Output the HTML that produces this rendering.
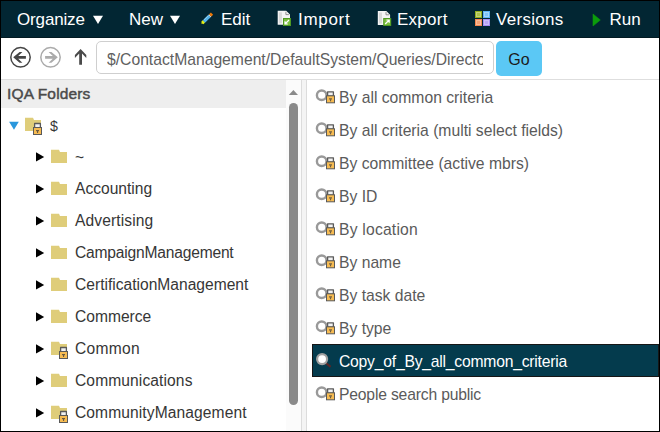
<!DOCTYPE html>
<html><head><meta charset="utf-8">
<style>
*{box-sizing:border-box;margin:0;padding:0}
html,body{width:660px;height:432px;overflow:hidden;background:#fff}
body{font-family:"Liberation Sans",sans-serif;position:relative}
.a{position:absolute}
#frame{position:absolute;left:0;top:0;width:660px;height:432px;border:1px solid #000;pointer-events:none;z-index:50}
#tb{left:1px;top:1px;width:658px;height:37px;background:#022633;border-bottom:1px solid #021a22}
.tl{position:absolute;top:1px;height:36px;line-height:36px;color:#fff;font-size:17px;white-space:nowrap}
#addr{left:1px;top:38px;width:658px;height:42px;background:#fff;border-bottom:1px solid #dedede}
#inp{left:96px;top:41px;width:398px;height:33px;border:1px solid #cfcfcf;border-radius:5px;background:#fff;overflow:hidden}
#inptxt{left:10px;top:2px;width:376px;height:31px;line-height:31px;font-size:15.7px;color:#606060;white-space:nowrap;overflow:hidden}
#go{left:496px;top:41px;width:46px;height:35px;background:#5bc8f5;border-radius:5px;font-size:16px;line-height:37px;text-align:center;color:#1b1b1b}
#hdr{left:1px;top:80px;width:285px;height:28px;background:#eeeeee}
#hdrt{left:6px;top:0;line-height:28px;font-size:15.5px;font-weight:normal;color:#4a4a4a;-webkit-text-stroke:0.45px #4a4a4a;letter-spacing:0.15px;white-space:nowrap}
#sb{left:286px;top:80px;width:15px;height:351px;background:#fbfbfb}
#split{left:301px;top:80px;width:6px;height:351px;background:#f4f4f4;border-left:1px solid #dcdcdc;border-right:1px solid #dcdcdc}
.tr{position:absolute;height:32px;line-height:32px;font-size:15.6px;color:#363636;white-space:nowrap}
.li{position:absolute;left:312px;width:347px;height:33px;line-height:33px;font-size:15.7px;color:#5a5a5a;white-space:nowrap}
.li span{position:absolute;left:27px;top:1px}
.li.sel{background:#043b4d;border:1px solid #161616;color:#fff}
.li.sel span{left:26px;top:0px}
</style></head><body>
<div id="frame"></div>
<div id="tb" class="a">
  <div class="tl" style="left:16px;letter-spacing:-0.15px">Organize</div>
  <div class="tl" style="left:128px">New</div>
  <div class="tl" style="left:220px">Edit</div>
  <div class="tl" style="left:297px;letter-spacing:0.7px">Import</div>
  <div class="tl" style="left:396px;letter-spacing:0.25px">Export</div>
  <div class="tl" style="left:495px;letter-spacing:0.3px">Versions</div>
  <div class="tl" style="left:608.5px">Run</div>
</div>
<div id="addr" class="a"></div>
<div id="inp" class="a"><div id="inptxt" class="a">$/ContactManagement/DefaultSystem/Queries/Directory</div></div>
<div id="go" class="a">Go</div>
<div id="hdr" class="a"><div id="hdrt" class="a">IQA Folders</div></div>
<div id="sb" class="a"></div>
<div id="split" class="a"></div>

<div class="tr" style="left:50px;top:110px;font-size:14.2px">$</div>
<div class="tr" style="left:75px;top:142px">~</div>
<div class="tr" style="left:75px;top:173px">Accounting</div>
<div class="tr" style="left:75px;top:205px;letter-spacing:0.1px">Advertising</div>
<div class="tr" style="left:75px;top:237px;letter-spacing:-0.2px">CampaignManagement</div>
<div class="tr" style="left:75px;top:269px">CertificationManagement</div>
<div class="tr" style="left:75px;top:301px">Commerce</div>
<div class="tr" style="left:75px;top:333px;letter-spacing:0.3px">Common</div>
<div class="tr" style="left:75px;top:365px;letter-spacing:0.1px">Communications</div>
<div class="tr" style="left:75px;top:397px;letter-spacing:0.09px">CommunityManagement</div>

<div class="li" style="top:80px"><span>By all common criteria</span></div>
<div class="li" style="top:113px"><span>By all criteria (multi select fields)</span></div>
<div class="li" style="top:146px"><span>By committee (active mbrs)</span></div>
<div class="li" style="top:179px"><span>By ID</span></div>
<div class="li" style="top:212px"><span style="letter-spacing:0.2px">By location</span></div>
<div class="li" style="top:245px"><span>By name</span></div>
<div class="li" style="top:278px"><span>By task date</span></div>
<div class="li" style="top:311px"><span>By type</span></div>
<div class="li sel" style="top:344px"><span style="letter-spacing:-0.22px">Copy_of_By_all_common_criteria</span></div>
<div class="li" style="top:377px"><span style="letter-spacing:-0.18px">People search public</span></div>
<svg class="a" style="left:0;top:0;z-index:10" width="660" height="432" viewBox="0 0 660 432">
<polygon points="93,15.8 103,15.8 98,24" fill="#fff"/>
<polygon points="170,15.8 180,15.8 175,24" fill="#fff"/>
<g transform="translate(201.3,24) rotate(-44)"><polygon points="0,0 3.4,-1.6 3.4,1.6" fill="#e4ee12"/><rect x="1.2" y="-1.6" width="2.4" height="3.2" fill="#e4ee12"/><rect x="3.6" y="-1.6" width="7.8" height="3.2" fill="#52b2ea"/><rect x="5" y="-1.6" width="6" height="0.9" fill="#9ad6f6"/><rect x="11.4" y="-1.6" width="0.9" height="3.2" fill="#e8e8e8"/><rect x="12.3" y="-1.6" width="2.6" height="3.2" fill="#ee7806"/></g>
<path d="M277.7 10.8 h8.5 l3.8 3.8 v10.2 h-12.3 z" fill="#f4f4f4"/><rect x="278.9" y="12.3" width="3" height="11" fill="#d9d9d9"/><path d="M285.9 11.8 v2.8 h3" fill="none" stroke="#888" stroke-width="0.9"/><rect x="283" y="18" width="8" height="8" fill="#4f9a22"/><rect x="284" y="19" width="6" height="6" fill="#7cbf3f"/><path d="M289 20 L285 24 M285 21.2 v2.8 h2.8" fill="none" stroke="#fff" stroke-width="1.2"/>
<path d="M377.8 11 h8.5 l3.8 3.8 v10.2 h-12.3 z" fill="#f4f4f4"/><rect x="379.0" y="12.5" width="3" height="11" fill="#d9d9d9"/><path d="M386.0 12 v2.8 h3" fill="none" stroke="#888" stroke-width="0.9"/><rect x="383.2" y="18" width="8" height="8" fill="#4f9a22"/><rect x="384.2" y="19" width="6" height="6" fill="#7cbf3f"/><path d="M385.2 24 L389.2 20 M386.4 20 h2.8 v2.8" fill="none" stroke="#fff" stroke-width="1.2"/>
<rect x="475" y="11" width="7" height="7" fill="#8fae1b"/><rect x="476.5" y="12.5" width="4" height="4" fill="#a9c04a" stroke="#c2d27a" stroke-width="1"/>
<rect x="483" y="11" width="7" height="7" fill="#5cb4f7"/><rect x="484.5" y="12.5" width="4" height="4" fill="#7fc4f9" stroke="#a6d6fb" stroke-width="1"/>
<rect x="475" y="19" width="7" height="7" fill="#f5874f"/><rect x="476.5" y="20.5" width="4" height="4" fill="#f7a272" stroke="#f9bb95" stroke-width="1"/>
<rect x="483" y="19" width="7" height="7" fill="#a58cf5"/><rect x="484.5" y="20.5" width="4" height="4" fill="#b9a6f7" stroke="#cdbff9" stroke-width="1"/>
<polygon points="593,14 600.3,20 593,26" fill="#0c9c0c" stroke="#0c9c0c" stroke-width="0.6" stroke-linejoin="round"/>
<circle cx="20.5" cy="57.3" r="9.7" fill="none" stroke="#454545" stroke-width="1.5"/>
<polygon points="13.2,57.3 19.6,51.9 22.4,51.9 18.2,55.9 25.9,55.9 25.9,58.7 18.2,58.7 22.4,62.7 19.6,62.7" fill="#454545"/>
<circle cx="50.5" cy="57.3" r="9.7" fill="none" stroke="#ababab" stroke-width="1.5"/>
<polygon points="57.8,57.3 51.4,51.9 48.6,51.9 52.8,55.9 45.1,55.9 45.1,58.7 52.8,58.7 48.6,62.7 51.4,62.7" fill="#ababab"/>
<polygon points="80.6,48.9 86.3,55 86.3,58 82,53.6 82,64.8 79.2,64.8 79.2,53.6 74.9,58 74.9,55" fill="#4a4a4a"/>
<polygon points="288.8,95 298,95 293.4,89.9" fill="#8a8a8a"/>
<rect x="289" y="103" width="9" height="302" rx="4.5" fill="#8a8a8a"/>
<polygon points="9.1,121.8 18.8,121.8 14,129.8" fill="#2a97dc"/>
<path d="M25 117.7 h8 l1 2.3 h7 v11 h-16 z" fill="#dfcd7a"/>
<g><path d="M34.6 127.8 V123.5 h5.8 V127.8 z" fill="#f2f2f2" stroke="#5a5a5a" stroke-width="1.3" stroke-linejoin="round"/><rect x="33.5" y="127.5" width="8" height="7" fill="#f6bb52" stroke="#595959" stroke-width="1"/><rect x="36.0" y="130.0" width="3" height="1.2" fill="#6a5a40"/><rect x="37.0" y="131.0" width="1.1" height="2" fill="#6a5a40"/></g>
<polygon points="36,152.3 44.2,156.9 36,161.5" fill="#000"/>
<path d="M51 149.7 h8 l1 2.3 h7 v11 h-16 z" fill="#dfcd7a"/>
<polygon points="36,184.3 44.2,188.9 36,193.5" fill="#000"/>
<path d="M51 181.7 h8 l1 2.3 h7 v11 h-16 z" fill="#dfcd7a"/>
<polygon points="36,216.3 44.2,220.9 36,225.5" fill="#000"/>
<path d="M51 213.7 h8 l1 2.3 h7 v11 h-16 z" fill="#dfcd7a"/>
<polygon points="36,248.3 44.2,252.9 36,257.5" fill="#000"/>
<path d="M51 245.7 h8 l1 2.3 h7 v11 h-16 z" fill="#dfcd7a"/>
<polygon points="36,280.3 44.2,284.9 36,289.5" fill="#000"/>
<path d="M51 277.7 h8 l1 2.3 h7 v11 h-16 z" fill="#dfcd7a"/>
<polygon points="36,312.3 44.2,316.9 36,321.5" fill="#000"/>
<path d="M51 309.7 h8 l1 2.3 h7 v11 h-16 z" fill="#dfcd7a"/>
<polygon points="36,344.3 44.2,348.9 36,353.5" fill="#000"/>
<path d="M51 341.7 h8 l1 2.3 h7 v11 h-16 z" fill="#dfcd7a"/>
<polygon points="36,376.3 44.2,380.9 36,385.5" fill="#000"/>
<path d="M51 373.7 h8 l1 2.3 h7 v11 h-16 z" fill="#dfcd7a"/>
<polygon points="36,408.3 44.2,412.9 36,417.5" fill="#000"/>
<path d="M51 405.7 h8 l1 2.3 h7 v11 h-16 z" fill="#dfcd7a"/>
<g><path d="M60.6 351.8 V347.5 h5.8 V351.8 z" fill="#f2f2f2" stroke="#5a5a5a" stroke-width="1.3" stroke-linejoin="round"/><rect x="59.5" y="351.5" width="8" height="7" fill="#f6bb52" stroke="#595959" stroke-width="1"/><rect x="62.0" y="354.0" width="3" height="1.2" fill="#6a5a40"/><rect x="63.0" y="355.0" width="1.1" height="2" fill="#6a5a40"/></g>
<g><path d="M60.6 415.8 V411.5 h5.8 V415.8 z" fill="#f2f2f2" stroke="#5a5a5a" stroke-width="1.3" stroke-linejoin="round"/><rect x="59.5" y="415.5" width="8" height="7" fill="#f6bb52" stroke="#595959" stroke-width="1"/><rect x="62.0" y="418.0" width="3" height="1.2" fill="#6a5a40"/><rect x="63.0" y="419.0" width="1.1" height="2" fill="#6a5a40"/></g>
<circle cx="321.7" cy="95.25" r="4.8" fill="none" stroke="#999" stroke-width="2.4"/>
<g><path d="M327.6 96.1 V91.8 h5.8 V96.1 z" fill="#f2f2f2" stroke="#5a5a5a" stroke-width="1.3" stroke-linejoin="round"/><rect x="326.5" y="95.8" width="8" height="7" fill="#f6bb52" stroke="#595959" stroke-width="1"/><rect x="329.0" y="98.3" width="3" height="1.2" fill="#6a5a40"/><rect x="330.0" y="99.3" width="1.1" height="2" fill="#6a5a40"/></g>
<circle cx="321.7" cy="128.25" r="4.8" fill="none" stroke="#999" stroke-width="2.4"/>
<g><path d="M327.6 129.1 V124.8 h5.8 V129.1 z" fill="#f2f2f2" stroke="#5a5a5a" stroke-width="1.3" stroke-linejoin="round"/><rect x="326.5" y="128.8" width="8" height="7" fill="#f6bb52" stroke="#595959" stroke-width="1"/><rect x="329.0" y="131.3" width="3" height="1.2" fill="#6a5a40"/><rect x="330.0" y="132.3" width="1.1" height="2" fill="#6a5a40"/></g>
<circle cx="321.7" cy="161.25" r="4.8" fill="none" stroke="#999" stroke-width="2.4"/>
<g><path d="M327.6 162.1 V157.8 h5.8 V162.1 z" fill="#f2f2f2" stroke="#5a5a5a" stroke-width="1.3" stroke-linejoin="round"/><rect x="326.5" y="161.8" width="8" height="7" fill="#f6bb52" stroke="#595959" stroke-width="1"/><rect x="329.0" y="164.3" width="3" height="1.2" fill="#6a5a40"/><rect x="330.0" y="165.3" width="1.1" height="2" fill="#6a5a40"/></g>
<circle cx="321.7" cy="194.25" r="4.8" fill="none" stroke="#999" stroke-width="2.4"/>
<g><path d="M327.6 195.1 V190.8 h5.8 V195.1 z" fill="#f2f2f2" stroke="#5a5a5a" stroke-width="1.3" stroke-linejoin="round"/><rect x="326.5" y="194.8" width="8" height="7" fill="#f6bb52" stroke="#595959" stroke-width="1"/><rect x="329.0" y="197.3" width="3" height="1.2" fill="#6a5a40"/><rect x="330.0" y="198.3" width="1.1" height="2" fill="#6a5a40"/></g>
<circle cx="321.7" cy="227.25" r="4.8" fill="none" stroke="#999" stroke-width="2.4"/>
<g><path d="M327.6 228.1 V223.8 h5.8 V228.1 z" fill="#f2f2f2" stroke="#5a5a5a" stroke-width="1.3" stroke-linejoin="round"/><rect x="326.5" y="227.8" width="8" height="7" fill="#f6bb52" stroke="#595959" stroke-width="1"/><rect x="329.0" y="230.3" width="3" height="1.2" fill="#6a5a40"/><rect x="330.0" y="231.3" width="1.1" height="2" fill="#6a5a40"/></g>
<circle cx="321.7" cy="260.25" r="4.8" fill="none" stroke="#999" stroke-width="2.4"/>
<g><path d="M327.6 261.1 V256.8 h5.8 V261.1 z" fill="#f2f2f2" stroke="#5a5a5a" stroke-width="1.3" stroke-linejoin="round"/><rect x="326.5" y="260.8" width="8" height="7" fill="#f6bb52" stroke="#595959" stroke-width="1"/><rect x="329.0" y="263.3" width="3" height="1.2" fill="#6a5a40"/><rect x="330.0" y="264.3" width="1.1" height="2" fill="#6a5a40"/></g>
<circle cx="321.7" cy="293.25" r="4.8" fill="none" stroke="#999" stroke-width="2.4"/>
<g><path d="M327.6 294.1 V289.8 h5.8 V294.1 z" fill="#f2f2f2" stroke="#5a5a5a" stroke-width="1.3" stroke-linejoin="round"/><rect x="326.5" y="293.8" width="8" height="7" fill="#f6bb52" stroke="#595959" stroke-width="1"/><rect x="329.0" y="296.3" width="3" height="1.2" fill="#6a5a40"/><rect x="330.0" y="297.3" width="1.1" height="2" fill="#6a5a40"/></g>
<circle cx="321.7" cy="326.25" r="4.8" fill="none" stroke="#999" stroke-width="2.4"/>
<g><path d="M327.6 327.1 V322.8 h5.8 V327.1 z" fill="#f2f2f2" stroke="#5a5a5a" stroke-width="1.3" stroke-linejoin="round"/><rect x="326.5" y="326.8" width="8" height="7" fill="#f6bb52" stroke="#595959" stroke-width="1"/><rect x="329.0" y="329.3" width="3" height="1.2" fill="#6a5a40"/><rect x="330.0" y="330.3" width="1.1" height="2" fill="#6a5a40"/></g>
<circle cx="321.7" cy="392.25" r="4.8" fill="none" stroke="#999" stroke-width="2.4"/>
<g><path d="M327.6 393.1 V388.8 h5.8 V393.1 z" fill="#f2f2f2" stroke="#5a5a5a" stroke-width="1.3" stroke-linejoin="round"/><rect x="326.5" y="392.8" width="8" height="7" fill="#f6bb52" stroke="#595959" stroke-width="1"/><rect x="329.0" y="395.3" width="3" height="1.2" fill="#6a5a40"/><rect x="330.0" y="396.3" width="1.1" height="2" fill="#6a5a40"/></g>
<path d="M326 363.2 L330.6 366.8" stroke="#5a2626" stroke-width="2.2"/>
<circle cx="322.1" cy="359.1" r="5" fill="#fff" stroke="#a0a0a0" stroke-width="2.2"/>
</svg>
</body></html>
